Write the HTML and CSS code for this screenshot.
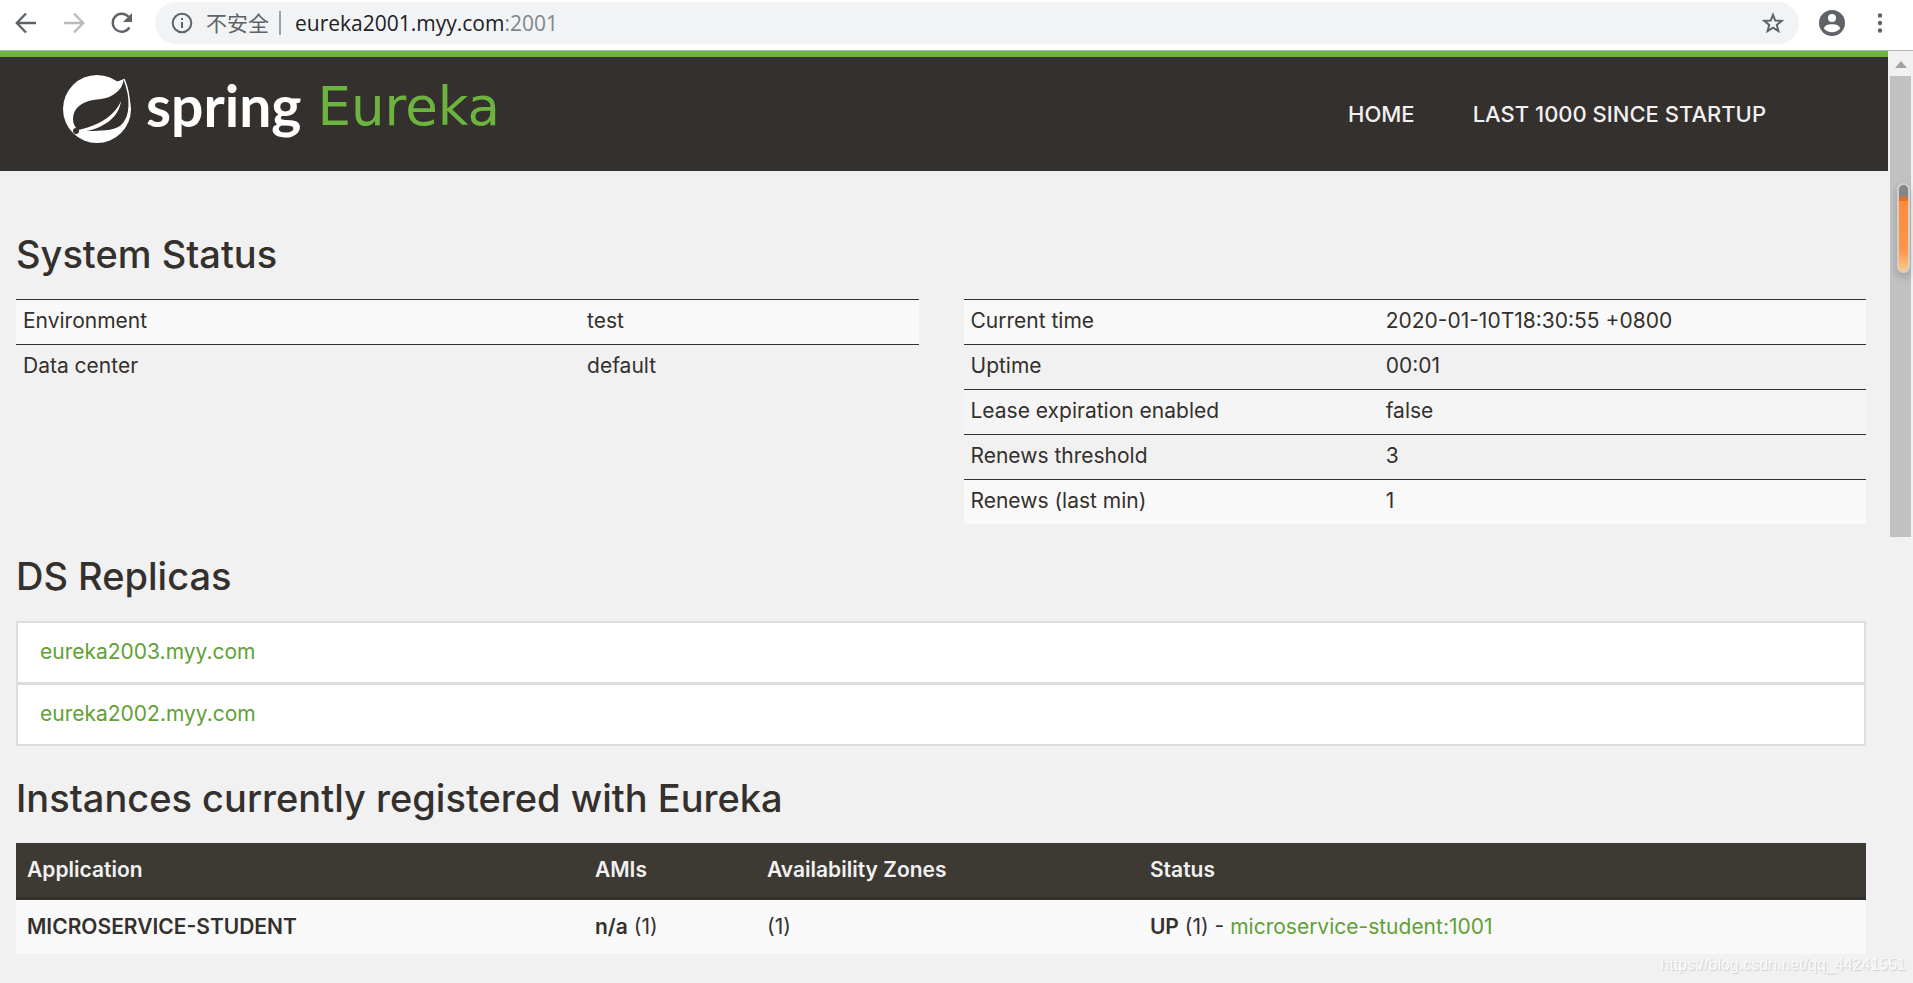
FILE: index.html
```html
<!DOCTYPE html>
<html lang="zh-CN">
<head>
  <meta charset="UTF-8">
  <title>Eureka</title>
  <meta name="viewport" content="width=device-width, initial-scale=1.0">
  <link rel="stylesheet" href="styles.css">
</head>
<body>

<div class="toolbar">
  <button class="tool-button" aria-label="Back">
    <svg width="22" height="22" viewBox="0 0 22 22" fill="none" stroke="#5f6368" stroke-width="2.400"><path d="M21 11H2M11 1.500L1.800 11L11 20.500"/></svg>
  </button>
  <button class="tool-button" aria-label="Forward">
    <svg width="22" height="22" viewBox="0 0 22 22" fill="none" stroke="#bababa" stroke-width="2.400"><path d="M1 11h19M11 1.500L20.200 11L11 20.500"/></svg>
  </button>
  <button class="tool-button" aria-label="Reload">
    <svg width="22" height="22" viewBox="0 0 22 22"><path d="M18.400 15.500A9 9 0 1 1 17.500 4.800" fill="none" stroke="#5f6368" stroke-width="2.400"/><path d="M21 1v9h-9z" fill="#5f6368"/></svg>
  </button>
  <div class="address-bar">
    <svg width="22" height="22" viewBox="0 0 22 22"><circle cx="11" cy="11" r="9.300" fill="none" stroke="#5f6368" stroke-width="2"/><path d="M10 10h2v6h-2zM10 6h2v2h-2z" fill="#5f6368"/></svg>
    <span class="insecure">不安全</span>
    <span class="url">eureka2001.myy.com<span class="port">:2001</span></span>
    <button class="star-button" aria-label="Bookmark">
      <svg width="22" height="22" viewBox="0 0 22 22" fill="none" stroke="#5f6368" stroke-width="2"><path d="M11 2.800L13.300 8.500L19.600 8.900L14.800 12.900L16.400 19L11 15.600L5.600 19L7.200 12.900L2.400 8.900L8.700 8.500Z"/></svg>
    </button>
  </div>
  <button class="tool-button profile" aria-label="Profile">
    <svg width="26" height="26" viewBox="0 0 26 26"><circle cx="13" cy="13" r="13" fill="#5f6368"/><circle cx="13" cy="8" r="4" fill="#fff"/><path d="M5 18.500C5 12.700 21 12.700 21 18.500C19 21 16.500 22.200 13 22.200S7 21 5 18.500Z" fill="#fff"/></svg>
  </button>
  <button class="tool-button" aria-label="Menu">
    <svg width="22" height="22" viewBox="0 0 22 22" fill="#5f6368"><circle cx="11" cy="3.500" r="2.200"/><circle cx="11" cy="11" r="2.200"/><circle cx="11" cy="18.500" r="2.200"/></svg>
  </button>
</div>

<div class="viewport">
  <div class="page">
    <header>
      <a class="logo" href="#">
        <svg width="70" height="70" viewBox="0 0 70 70">
          <circle cx="35" cy="35" r="34" fill="#fff"/>
          <path d="M62 5L60 12L54 8Z" fill="#fff"/>
          <path d="M62 5C61 11 59 14 56 17C50 23 43 25 31 26C19 28 11 35 11 45C11 50 13 53 16 56C30 58 50 59 59 52C70 43 69 22 62 5Z" fill="#34302d"/>
          <path d="M62 5C69 22 70 43 59 52C50 59 34 57 20 58" fill="none" stroke="#fff" stroke-width="1.500"/>
          <path d="M16 56C35 52 52 43 59 27C57 43 42 55 19 58Z" fill="#fff"/>
          <circle cx="14" cy="57" r="3" fill="#34302d"/>
        </svg>
        <span class="logo-spring">spring</span>
        <span class="logo-eureka">Eureka</span>
      </a>
      <nav>
        <a href="#">HOME</a>
        <a href="#">LAST 1000 SINCE STARTUP</a>
      </nav>
    </header>

    <main>
      <h1>System Status</h1>
      <div class="status">
        <table class="environment">
          <tr><td>Environment</td><td>test</td></tr>
          <tr><td>Data center</td><td>default</td></tr>
        </table>
        <table class="renewals">
          <tr><td>Current time</td><td>2020-01-10T18:30:55 +0800</td></tr>
          <tr><td>Uptime</td><td>00:01</td></tr>
          <tr class="hover"><td>Lease expiration enabled</td><td>false</td></tr>
          <tr><td>Renews threshold</td><td>3</td></tr>
          <tr><td>Renews (last min)</td><td>1</td></tr>
        </table>
      </div>

      <h1>DS Replicas</h1>
      <ul class="replicas">
        <li><a href="#">eureka2003.myy.com</a></li>
        <li><a href="#">eureka2002.myy.com</a></li>
      </ul>

      <h1>Instances currently registered with Eureka</h1>
      <table class="instances">
        <thead>
          <tr>
            <th class="col-app">Application</th>
            <th class="col-ami">AMIs</th>
            <th class="col-zone">Availability Zones</th>
            <th>Status</th>
          </tr>
        </thead>
        <tbody>
          <tr>
            <td><b>MICROSERVICE-STUDENT</b></td>
            <td><b>n/a</b> (1)</td>
            <td>(1)</td>
            <td><b>UP</b> (1) - <a href="#">microservice-student:1001</a></td>
          </tr>
        </tbody>
      </table>
    </main>
  </div>

  <div class="scrollbar">
    <svg width="12" height="7" viewBox="0 0 12 7"><path d="M6 0L12 7H0Z" fill="#a3a3a3"/></svg>
    <div class="thumb"></div>
  </div>
  <div class="gauge"></div>
  <div class="watermark">https://blog.csdn.net/qq_44241551</div>
</div>

</body>
</html>
```
FILE: styles.css
```css
* {
  box-sizing: border-box;
}

body {
  margin: 0;
  min-height: 100vh;
  display: flex;
  flex-direction: column;
  font-family: Inter, "Noto Sans CJK SC", sans-serif;
  font-size: 21px;
  line-height: 27px;
  color: #34302d;
  background-color: #f1f1f1;
}

a {
  color: #5fa134;
  text-decoration: none;
}

button {
  display: flex;
  padding: 0;
  border: none;
  background: none;
  cursor: pointer;
}

/* browser toolbar */
.toolbar {
  display: flex;
  align-items: center;
  gap: 26px;
  padding: 2px 22px 6px 15px;
  background-color: #fff;
  border-bottom: 1px solid #b6b4b6;
}

.address-bar {
  flex: 1;
  display: flex;
  align-items: center;
  height: 42px;
  margin-left: -4px;
  padding: 0 15px 0 16px;
  border-radius: 21px;
  background-color: #f1f3f4;
  font-family: "Open Sans", "Noto Sans CJK SC", sans-serif;
  color: #202124;
}

.insecure {
  margin-left: 13px;
  padding-right: 10px;
  border-right: 2px solid #9aa0a6;
  line-height: 24px;
  color: #5f6368;
}

.url {
  margin-left: 14px;
}

.port {
  color: #80868b;
}

.star-button {
  margin-left: auto;
}

.profile {
  margin: 0 -2px 0 -6px;
}

/* page */
.viewport {
  flex: 1;
  display: flex;
  position: relative;
}

.page {
  flex: 1;
}

header {
  display: flex;
  justify-content: space-between;
  height: 120px;
  padding: 0 122px 0 62px;
  border-top: 6px solid #6db33f;
  background-color: #34302d;
}

.logo {
  display: flex;
  height: 104px;
  align-items: center;
  line-height: 70px;
}

.logo-spring {
  margin-left: 14px;
  padding-bottom: 8px;
  font-family: Lato, sans-serif;
  font-size: 57px;
  font-weight: bold;
  color: #fff;
}

.logo-eureka {
  margin-left: 16px;
  padding-bottom: 4px;
  font-family: "DejaVu Sans", sans-serif;
  font-size: 53px;
  color: #6db33f;
}

nav {
  display: flex;
  align-items: center;
  gap: 58px;
}

nav a {
  font-size: 22px;
  font-weight: 500;
  color: #f1f1f1;
}

main {
  padding: 60px 22px 28px 16px;
}

h1 {
  margin: 0 0 22px;
  font-size: 38px;
  font-weight: 500;
  line-height: 46px;
}

table {
  border-spacing: 0;
}

.status {
  display: grid;
  grid-template-columns: 1fr 1fr;
  align-items: start;
  column-gap: 45px;
  margin-bottom: 29px;
}

.status td {
  height: 45px;
  padding: 0 7px 3px;
  border-top: 1px solid #34302d;
}

.status tr:nth-child(odd) {
  background-color: #f9f9f9;
}

.status tr.hover {
  background-color: #f5f5f5;
}

.environment td:first-child {
  width: 62.5%;
}

.renewals td:first-child {
  width: 46%;
}

.replicas {
  margin: 0 0 29px;
  padding: 0;
  list-style: none;
  border: 2px solid #ddd;
  background-color: #fff;
}

.replicas li {
  padding: 15px 22px 17px;
}

.replicas li + li {
  border-top: 3px solid #ddd;
}

.instances {
  width: 100%;
  text-align: left;
}

.instances th {
  height: 57px;
  padding: 0 11px 2px;
  border-bottom: 3px solid #34302d;
  background-color: #3d3933;
  font-weight: 600;
  color: #f1f1f1;
}

.instances td {
  height: 54px;
  padding: 0 11px 2px;
  background-color: #f9f9f9;
}

.instances b {
  font-weight: 600;
}

.col-app {
  width: 30.7%;
}

.col-ami {
  width: 9.3%;
}

.col-zone {
  width: 20.7%;
}

/* scrollbar and overlays */
.scrollbar {
  width: 25px;
  padding: 10px 2px 0;
  display: flex;
  flex-direction: column;
  align-items: center;
  gap: 8px;
  background-color: #f1f1f1;
}

.thumb {
  width: 21px;
  height: 50%;
  background-color: #c1c1c1;
}

.gauge {
  position: absolute;
  top: 132px;
  right: 3px;
  width: 13px;
  height: 90px;
  border: 2px solid #d0d0d0;
  border-radius: 7px;
  background: linear-gradient(#858585 12px, #e8701a 12px, #e8701a 16px, #ff8b3a 16px, #ff9447 65px, #ffcb88);
  box-shadow: 0 4px 8px rgba(0, 0, 0, 0.2);
}

.watermark {
  position: absolute;
  right: 7px;
  bottom: 5px;
  font-family: "Liberation Sans", sans-serif;
  font-size: 16px;
  color: #fafafa;
  text-shadow: 1px 1px 1px #ccc;
}
```
